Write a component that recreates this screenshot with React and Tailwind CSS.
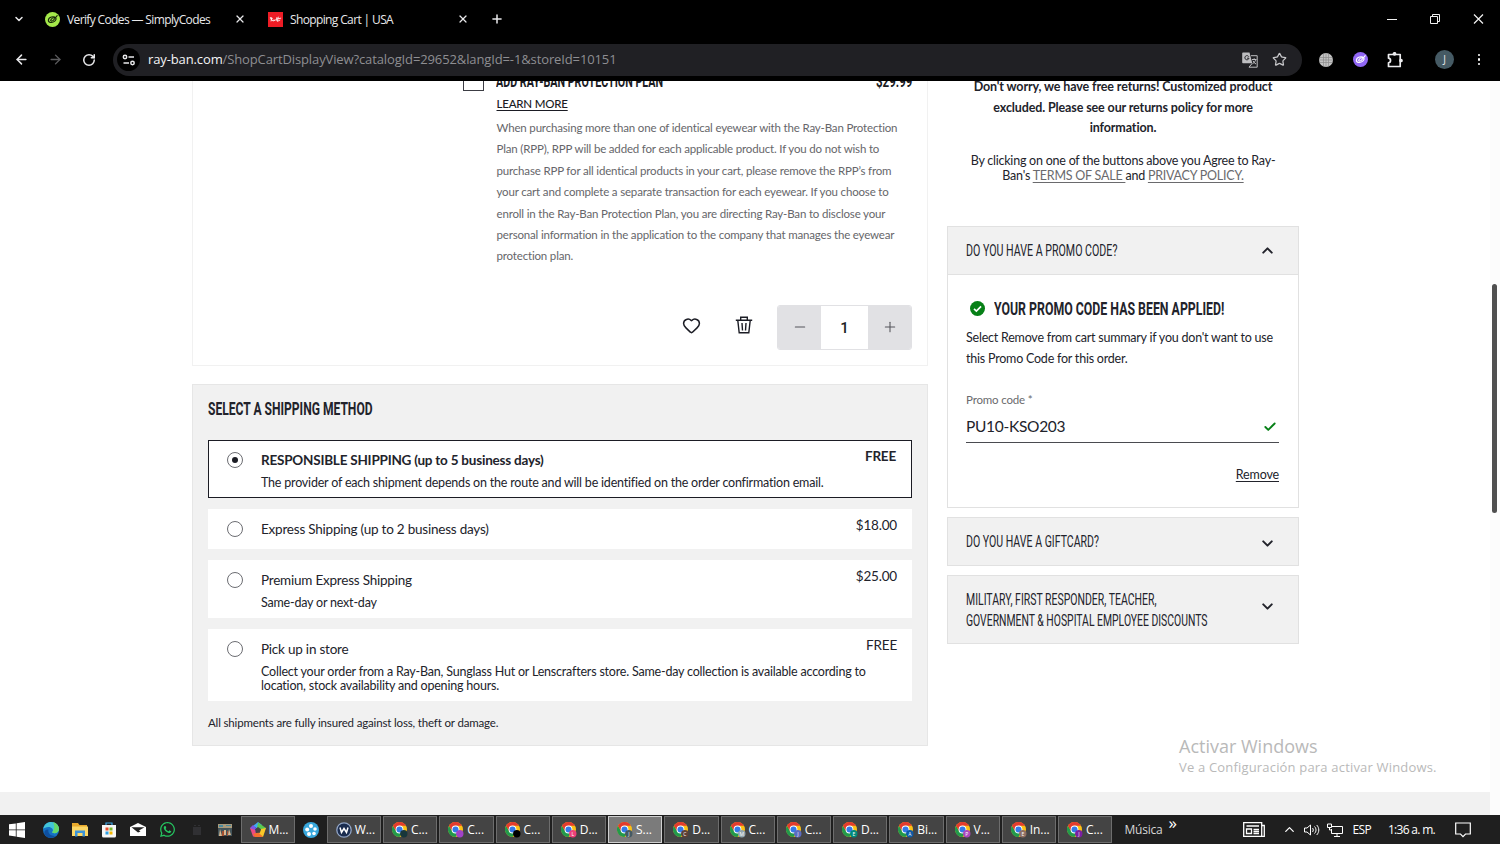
import React from 'react';
import {
  ArrowLeft, ArrowRight, Check, ChevronDown, ChevronUp, Heart, Minus, Plus, RotateCw, Star, X,
} from 'lucide-react';
import { FaWhatsapp } from 'react-icons/fa';

const shippingMethods = [
  {
    title: 'RESPONSIBLE SHIPPING (up to 5 business days)',
    note: ['The provider of each shipment depends on the route and will be identified on the order confirmation email.'],
    price: 'FREE',
    height: 'h-[58px]',
    selected: true,
  },
  { title: 'Express Shipping (up to 2 business days)', price: '$18.00', height: 'h-[40px]' },
  { title: 'Premium Express Shipping', note: ['Same-day or next-day'], price: '$25.00', height: 'h-[58px]' },
  {
    title: 'Pick up in store',
    note: [
      'Collect your order from a Ray-Ban, Sunglass Hut or Lenscrafters store. Same-day collection is available according to',
      'location, stock availability and opening hours.',
    ],
    price: 'FREE',
    height: 'h-[72px]',
  },
];

const chromeWindows = [
  { label: 'C...', badge: '#17363b' },
  { label: 'C...', badge: '#a142c8' },
  { label: 'C...', badge: '#000000' },
  { label: 'D...', badge: '#ec407a', letter: 'L' },
  { label: 'S...', badge: '#455a64', letter: 'J', active: true },
  { label: 'D...', badge: '#5d4037', letter: 'C' },
  { label: 'C...', badge: '#90a4ae', letter: 'M' },
  { label: 'C...', badge: '#5c6bc0', letter: 'J' },
  { label: 'D...', badge: '#00897b', letter: 'E' },
  { label: 'Bi...', badge: '#0d5aa7', letter: 'A' },
  { label: 'V...', badge: '#ab47bc', letter: 'P' },
  { label: 'In...', badge: '#8d6e63', letter: 'E' },
  { label: 'C...', badge: '#7b1fa2', letter: 'J' },
];

const CodeMark = ({ bg, fg }) => (
  <svg viewBox="0 0 16 16" className="h-[15px] w-[15px] shrink-0">
    <circle cx="8" cy="8" r="8" fill={bg} />
    <path d="M11.5 6.2C9.5 4.2 4 5 3.6 8.6c-.3 3 4.300 3.400 6.800 1.200.9-.9 1.300-1.700 1.500-2.500M6 8.500c0 2 2.400 1.200 3.600-.5L13 3.900M6.500 8c.8-1.400 3-2 4.500-1.700" fill="none" stroke={fg} strokeWidth="1.2" strokeLinecap="round" />
  </svg>
);

const Tab = ({ icon, title, className }) => (
  <div className={`flex items-center ${className}`}>
    {icon}
    <span className="ml-[7px] mt-[2px] flex-1 whitespace-nowrap text-[12px] tracking-[-0.63px]">{title}</span>
    <X size={12} strokeWidth={2.4} />
  </div>
);

const BrowserBar = () => (
  <header className="h-[81px] shrink-0 bg-black text-[#e8e8ea]">
    <div className="flex h-[38px] items-center pl-[13px] pr-[16px]">
      <ChevronDown size={12} strokeWidth={3} />
      <Tab
        title="Verify Codes — SimplyCodes"
        className="ml-5 w-[201px]"
        icon={<CodeMark bg="#a4e84a" fg="#16240a" />}
      />
      <Tab
        title="Shopping Cart | USA"
        className="ml-[22px] w-[201px]"
        icon={
          <svg viewBox="0 0 16 16" className="h-[15px] w-[15px] shrink-0">
            <rect width="16" height="16" fill="#ee1c25" />
            <path d="M2 6l2 .2L3.200 10M2 7.500c3-2 3.500.3 1.400.7l2.300 1.500.7-1.500.6 1.200.9-1.500M9.500 5.500L8.700 9.500M9.500 7.500l4.500-1M11 5l-1 5 3-1.500" fill="none" stroke="#fff" strokeWidth=".9" />
          </svg>
        }
      />
      <Plus size={14} strokeWidth={2.6} className="ml-[21px]" />
      <svg viewBox="0 0 98 12" className="ml-auto h-3 w-[98px]" fill="none" stroke="#f1f1f1" strokeWidth="1">
        <path d="M1 6.500h10M46.500 3.500V1.500h7v7h-2M44.500 3.500h7v7h-7z" />
        <path d="M88 1.500l9 9M97 1.500l-9 9" strokeWidth="1.200" />
      </svg>
    </div>
    <div className="flex h-[43px] items-center pl-[14px] pr-[15px]">
      <ArrowLeft size={15} strokeWidth={2.4} />
      <ArrowRight size={15} strokeWidth={2.2} className="ml-[19px] text-[#5c5c5e]" />
      <RotateCw size={14} strokeWidth={2.6} className="ml-[19px]" />
      <div className="ml-[17px] flex h-8 w-[1189px] items-center rounded-full bg-[#202024] pl-1 pr-[15px]">
        <div className="flex h-[23px] w-[23px] items-center justify-center rounded-full bg-black">
          <svg viewBox="0 0 14 12" className="h-3 w-3.5" fill="none" stroke="#e8e8ea" strokeWidth="1.500">
            <circle cx="3" cy="3" r="1.700" />
            <path d="M6.500 3H12M1.500 9H7" />
            <circle cx="10.500" cy="9" r="1.700" />
          </svg>
        </div>
        <span className="ml-[8px] flex-1 whitespace-nowrap text-[13px] tracking-[-0.12px] text-[#8e8e92]">
          <span className="text-[#f4f4f6]">ray-ban.com</span>
          /ShopCartDisplayView?catalogId=29652&amp;langId=-1&amp;storeId=10151
        </span>
        <svg viewBox="0 0 16 16" className="h-4 w-4" fill="none">
          <path d="M1 .5h6.500l2.800 10.700H1a.8.8 0 0 1-.8-.8V1.300A.8.8 0 0 1 1 .5z" fill="#bdbdc0" />
          <path d="M6.800 4.700a2.100 2.100 0 1 0 .2 1.500H5" stroke="#29292d" strokeWidth="1" />
          <path d="M9 3.700h6.200v11.500H7l3.300-4M10 7.500h4.500M12.200 6.300v1.200M13.700 7.500c-.4 2-1.500 3.200-3 4.300M11 8.800c.6 1.500 1.600 2.500 3 3.200" stroke="#bdbdc0" strokeWidth="1" />
        </svg>
        <Star size={15} strokeWidth={2} className="ml-[14px] text-[#c7c7ca]" />
      </div>
      <svg viewBox="0 0 14 14" className="ml-[17px] h-3.5 w-3.5">
        <circle cx="7" cy="7" r="7" fill="#c3c3c3" />
        <path d="M4.500 1v12M7 0v14M9.500 1v12M0 7h14M1 4.500h12M1 9.500h12" stroke="#8b8b8b" strokeWidth=".7" />
      </svg>
      <div className="ml-5"><CodeMark bg="#9167f5" fg="#fff" /></div>
      <svg viewBox="0 0 16 16" className="ml-[19px] h-4 w-4" fill="none" stroke="#ececee" strokeWidth="1.700" strokeLinejoin="round">
        <path d="M1.500 2.500H13.200V14.500H1.500V10.800c2.700-.2 2.700-4.400 0-4.600z" />
        <circle cx="7.500" cy="1.800" r="1" fill="#ececee" />
        <circle cx="14" cy="8.500" r="1" fill="#ececee" />
      </svg>
      <span className="ml-8 flex h-[19px] w-[19px] items-center justify-center rounded-full bg-[#455a64] text-[10px]">J</span>
      <span className="ml-auto mr-[5px] flex flex-col gap-[2px]">
        <i className="h-[2.500px] w-[2.500px] rounded-full bg-white" />
        <i className="h-[2.500px] w-[2.500px] rounded-full bg-white" />
        <i className="h-[2.500px] w-[2.500px] rounded-full bg-white" />
      </span>
    </div>
  </header>
);

// Tall condensed display type used for headings
const Display = ({ children, className }) => (
  <span className={`block w-max origin-left whitespace-nowrap font-['Roboto','Liberation_Sans',sans-serif] ${className}`}>
    {children}
  </span>
);

const TrashIcon = () => (
  <svg viewBox="0 0 18 18" className="h-[18px] w-[18px]" fill="none" stroke="#1b1c24" strokeWidth="1.400">
    <path d="M.8 4.200h16.400M5.700 4V1.200h6.600V4M2.800 4.500l1.400 12.300h9.600l1.400-12.300M7 7l.5 7.500M11 7l-.5 7.500" />
  </svg>
);

const ProductCard = () => (
  <section className="h-[285px] overflow-hidden border border-t-0 border-[#f1f1f1] pl-[270px] pr-[15px]">
    <div className="-mt-[11px] flex h-[22px]">
      <span className="h-[21px] w-[21px] border border-[#3c3d44]" />
      <div className="ml-[12px] w-[300px] pt-px">
        <Display className="scale-x-[0.67] text-[16px] font-bold leading-[22px] text-[#1b1c24]">ADD RAY-BAN PROTECTION PLAN</Display>
      </div>
      <div className="ml-auto w-9 pt-px">
        <Display className="scale-x-[0.72] text-[16px] font-bold leading-[22px] text-[#1b1c24]">$29.99</Display>
      </div>
    </div>
    <div className="ml-[33.500px]">
      <a className="block pt-1 text-[11.500px] font-medium leading-4 tracking-[-0.2px] text-[#1b1c24] underline underline-offset-2">LEARN MORE</a>
      <p className="mt-[5px] whitespace-nowrap text-[11.500px] leading-[21.4px] tracking-[-0.17px] text-[#66666a]">
        When purchasing more than one of identical eyewear with the Ray-Ban Protection<br />
        Plan (RPP), RPP will be added for each applicable product. If you do not wish to<br />
        purchase RPP for all identical products in your cart, please remove the RPP’s from<br />
        your cart and complete a separate transaction for each eyewear. If you choose to<br />
        enroll in the Ray-Ban Protection Plan, you are directing Ray-Ban to disclose your<br />
        personal information in the application to the company that manages the eyewear<br />
        protection plan.
      </p>
    </div>
    <div className="mt-[38px] flex justify-end">
      <Heart size={19} strokeWidth={1.900} className="mr-[34px] mt-[11px] text-[#1b1c24]" />
      <div className="mr-[24.500px] mt-[11px]"><TrashIcon /></div>
      <div className="flex h-[45px] w-[135px] overflow-hidden rounded-[3px] border border-[#e1e1e4] bg-white">
        <span className="flex w-[43px] items-center justify-center bg-[#e1e1e4]"><Minus size={16} strokeWidth={1.600} className="text-[#55555b]" /></span>
        <span className="flex flex-1 items-center justify-center pt-px font-['Roboto'] text-[15px] font-medium text-[#1b1c24]">1</span>
        <span className="flex w-[43px] items-center justify-center bg-[#e1e1e4]"><Plus size={16} strokeWidth={1.600} className="text-[#55555b]" /></span>
      </div>
    </div>
  </section>
);

const ShippingOption = ({ title, note, price, height, selected }) => (
  <div className={`flex bg-white pr-[15px] ${height} ${selected ? 'border border-[#1b1c24] pl-[18px]' : 'pl-[19px]'}`}>
    <span className={`flex h-4 w-4 shrink-0 items-center justify-center rounded-full border border-[#6c6d72] ${selected ? 'mt-[10.500px]' : 'mt-[11.500px]'}`}>
      {selected && <i className="h-[6px] w-[6px] rounded-full bg-[#1b1c24]" />}
    </span>
    <div className={`ml-[18px] w-[590px] shrink-0 whitespace-nowrap ${selected ? 'pt-[9.500px]' : 'pt-[10.500px]'}`}>
      <h3 className={`text-[13.500px] leading-[18px] tracking-[-0.22px] ${selected ? 'font-bold' : ''}`}>{title}</h3>
      {note && (
        <div className="mt-[7.500px] text-[12.500px] leading-[14px] tracking-[-0.2px]">
          {note.map((line) => <p key={line}>{line}</p>)}
        </div>
      )}
    </div>
    <span className={`ml-auto text-[13.500px] leading-[18px] tracking-[-0.2px] ${selected ? 'pt-[6px] font-bold' : 'pt-[7px]'}`}>{price}</span>
  </div>
);

const Shipping = () => (
  <section className="mt-[18px] h-[362px] border border-[#e6e6e6] bg-[#f1f1f1] px-[15px] text-[#22232b]">
    <Display className="mb-[19px] mt-[12px] scale-x-[0.69] text-[17.500px] font-bold leading-6">SELECT A SHIPPING METHOD</Display>
    <div className="flex flex-col gap-[11px]">
      {shippingMethods.map((m) => <ShippingOption key={m.title} {...m} />)}
    </div>
    <p className="mt-[13px] text-[11.500px] leading-[18px] tracking-[-0.16px]">All shipments are fully insured against loss, theft or damage.</p>
  </section>
);

const Sidebar = () => (
  <aside className="ml-[19px] w-[352px] text-[#22232b]">
    <p className="-mt-[4px] whitespace-nowrap text-center text-[12.500px] font-bold leading-[20.500px] tracking-[-0.12px]">
      Don't worry, we have free returns! Customized product<br />
      excluded. Please see our returns policy for more<br />
      information.
    </p>
    <p className="mt-[14px] whitespace-nowrap text-center text-[12.500px] leading-[15px] tracking-[-0.23px]">
      By clicking on one of the buttons above you Agree to Ray-<br />
      Ban's <a className="text-[#6a6a6d] underline underline-offset-2">TERMS OF SALE </a>and <a className="text-[#6a6a6d] underline underline-offset-2">PRIVACY POLICY.</a>
    </p>

    <section className="mt-[43.500px] h-[282px] border border-[#e1e1e1]">
      <div className="flex h-12 items-center border-b border-[#e1e1e1] bg-[#f1f1f1] pl-[18px] pr-[22px]">
        <div className="w-[280px] pt-[2px]">
          <Display className="scale-x-[0.645] text-[16.500px]">DO YOU HAVE A PROMO CODE?</Display>
        </div>
        <ChevronUp size={17} strokeWidth={2.800} className="ml-auto" />
      </div>
      <div className="px-[18px] pt-[21px]">
        <div className="flex h-6 items-center">
          <svg viewBox="0 0 16 16" className="ml-1 h-[15px] w-[15px] shrink-0">
            <circle cx="8" cy="8" r="8" fill="#078017" />
            <path d="M4.300 8.300l2.500 2.400 5-5" fill="none" stroke="#fff" strokeWidth="1.800" />
          </svg>
          <Display className="ml-[9px] scale-x-[0.685] text-[18px] font-bold">YOUR PROMO CODE HAS BEEN APPLIED!</Display>
        </div>
        <p className="mt-[8px] whitespace-nowrap text-[12.500px] leading-[20.500px] tracking-[-0.22px]">
          Select Remove from cart summary if you don't want to use<br />
          this Promo Code for this order.
        </p>
        <label className="mt-[23px] block text-[11.500px] leading-4 tracking-[-0.16px] text-[#6a6a6d]">Promo code *</label>
        <div className="mt-[3px] flex h-[32px] w-[313px] items-center border-b border-[#4a4b50] text-[15.500px] tracking-[-0.3px]">
          <span>PU10-KSO203</span>
          <Check size={14} strokeWidth={3.200} className="ml-auto mr-[2px] text-[#078017]" />
        </div>
        <a className="mt-[23px] block w-[313px] text-right text-[12.500px] leading-[18px] tracking-[-0.15px] underline underline-offset-2">Remove</a>
      </div>
    </section>

    <section className="mt-[9px] flex h-[49px] items-center border border-[#e1e1e1] bg-[#f1f1f1] pl-[18px] pr-[22px]">
      <div className="w-[280px] pt-[2px]">
        <Display className="scale-x-[0.64] text-[16.500px]">DO YOU HAVE A GIFTCARD?</Display>
      </div>
      <ChevronDown size={17} strokeWidth={2.800} className="ml-auto mt-[3px]" />
    </section>
    <section className="mt-[9px] flex h-[69px] items-center border border-[#e1e1e1] bg-[#f1f1f1] pl-[18px] pr-[22px]">
      <div className="w-[280px] pt-[2px]">
        <Display className="scale-x-[0.635] text-[16.500px] leading-[20.500px]">MILITARY, FIRST RESPONDER, TEACHER,</Display>
        <Display className="scale-x-[0.63] text-[16.500px] leading-[20.500px]">GOVERNMENT &amp; HOSPITAL EMPLOYEE DISCOUNTS</Display>
      </div>
      <ChevronDown size={17} strokeWidth={2.800} className="-mt-[6px] ml-auto shrink-0" />
    </section>
  </aside>
);

const ChromeIcon = ({ badge, letter }) => (
  <svg viewBox="0 0 16 16" className="h-4 w-4 shrink-0">
    <circle cx="7.500" cy="7.500" r="7.500" fill="#fbc116" />
    <path d="M1 3.750A7.500 7.500 0 0 0 7.500 15L10.700 9.400 4.200 9.300z" fill="#229a4b" />
    <path d="M1 3.750A7.500 7.500 0 0 1 14 3.750H7.500L4.200 9.300z" fill="#e33b2e" />
    <circle cx="7.500" cy="7.500" r="3.900" fill="#fff" />
    <circle cx="7.500" cy="7.500" r="3" fill="#3579e8" />
    <circle cx="11.800" cy="11.800" r="3.700" fill={badge} />
    {letter && <text x="11.800" y="13.600" textAnchor="middle" fontSize="5" fill="#fff">{letter}</text>}
  </svg>
);

const TaskButton = ({ icon, label, active, className = '' }) => (
  <div
    className={`flex h-[27px] w-[54.300px] shrink-0 items-center gap-[3px] border pl-[8px] text-[12px] text-white ${
      active ? 'border-[#d0d0d0] bg-[#7b7b7b]' : 'border-[#6d6d6d] bg-[#444444]'
    } ${className}`}
  >
    {icon}
    <span className="tracking-[-0.1px]">{label}</span>
  </div>
);

const Taskbar = () => (
  <footer className="flex h-[29px] shrink-0 items-center bg-[#1f1f1f] text-white">
    <svg viewBox="0 0 16 16" className="ml-[9px] h-4 w-4" fill="#fff">
      <path d="M0 2.300L6.800 1.400V7.500H0zM7.600 1.300L16 0v7.500H7.600zM0 8.300h6.800v6.200L0 13.600zM7.600 8.300H16V16l-8.400-1.200z" />
    </svg>
    <svg viewBox="0 0 16 16" className="ml-[18px] h-4 w-4">
      <circle cx="8" cy="8" r="8" fill="#1672c4" />
      <path d="M.2 7C1 2.500 4.500 0 8 0c5 0 8 3.500 8 7 0 2.700-2 4.200-4.500 4.200-2 0-2.600-.8-2-1.500C11 7.500 8.500 5 5.500 5 3 5 1 6 .2 7z" fill="#43c5d8" />
      <path d="M10 .3c4 .9 6 4 6 6.700 0 2.700-2 4.200-4.500 4.200-2 0-2.600-.8-2-1.500C12 7 11.500 3 10 .3z" fill="#65d96b" />
      <path d="M5.500 7.500C4.500 11 7.500 14.500 12.500 14c-4 3-9.500 2-11-2C.8 9 2.500 7 5.500 7.500z" fill="#0e4f9e" />
    </svg>
    <svg viewBox="0 0 16 16" className="ml-[12.500px] h-4 w-4">
      <path d="M0 1h6l1.500 2H15v11H0z" fill="#e9aa2c" />
      <path d="M0 4.500h16V14H0z" fill="#fcd766" />
      <path d="M3 14.500V8.500h10v6h-2.500V11h-5v3.500z" fill="#3b93d8" />
    </svg>
    <svg viewBox="0 0 16 16" className="ml-[13px] h-4 w-4">
      <path d="M5 3V1h6v2" fill="none" stroke="#3ba5e6" strokeWidth="1.200" />
      <path d="M1 3h14v11a1.500 1.500 0 0 1-1.500 1.500h-11A1.500 1.500 0 0 1 1 14z" fill="#f6f6f6" />
      <path d="M4.500 5.500h3v3h-3z" fill="#e94f2e" /><path d="M8.500 5.500h3v3h-3z" fill="#77b82a" />
      <path d="M4.500 9.500h3v3h-3z" fill="#2d9fe3" /><path d="M8.500 9.500h3v3h-3z" fill="#f5b800" />
    </svg>
    <svg viewBox="0 0 16 16" className="ml-[13px] h-4 w-4">
      <path d="M0 5l8-4 8 4v9H0z" fill="#fff" />
      <path d="M1.500 5.200h13L9 8.500l1.500 1L8 10.500z" fill="#222" />
    </svg>
    <FaWhatsapp size={17} className="ml-[13px] text-[#25c560]" />
    <svg viewBox="0 0 10 12" className="ml-[16px] h-3 w-2.5">
      <path d="M1 3h8v8H1zM2 1h2v1H2zM6 1h2v1H6z" fill="#303033" />
    </svg>
    <svg viewBox="0 0 16 16" className="ml-[15px] h-4 w-4">
      <path d="M1 2h14v4H1z" fill="#a89a7c" /><path d="M1 6h14v8H1z" fill="#43545a" />
      <path d="M2 3h4v2H2zM9 3h5v1H9z" fill="#4a8ba0" /><path d="M3 7l2 7H2zM7 8h2v5H7zM12 7l2 6h-3z" fill="#d9b78f" />
      <path d="M5 9h2v5H5zM10 9h1v5h-1z" fill="#a34e2e" />
    </svg>
    <TaskButton
      className="ml-[8px]"
      label="M..."
      icon={
        <svg viewBox="0 0 16 16" className="h-4 w-4 shrink-0">
          <path d="M8 0l4 3-4 4-5-3z" fill="#3fa9f5" /><path d="M3 3l4 4-3 5-4-6z" fill="#7e57e8" />
          <path d="M8 .5l8 5.500-3 4-6-4z" fill="#5bc94e" /><path d="M0 6l5 2 2 7-4-.5z" fill="#ec4a82" />
          <path d="M3 12l6-2 4 5H5z" fill="#f3702e" /><path d="M16 6l-3 9-4-4 2-4z" fill="#f9c728" />
          <path d="M8 5l3 2.200-1.100 3.600H6.100L5 7.200z" fill="#444444" />
        </svg>
      }
    />
    <svg viewBox="0 0 16 16" className="ml-[8px] h-4 w-4 shrink-0">
      <circle cx="8" cy="8" r="8" fill="#38a7dc" />
      <g fill="#fff"><circle cx="8" cy="4" r="2" /><circle cx="4.200" cy="7.500" r="2" /><circle cx="12" cy="7" r="1.800" /><circle cx="6" cy="12" r="2" /><circle cx="11" cy="11.500" r="1.800" /></g>
    </svg>
    <TaskButton
      className="ml-[8px]"
      label="W..."
      icon={
        <svg viewBox="0 0 16 16" className="h-4 w-4 shrink-0">
          <circle cx="8" cy="8" r="7.200" fill="#1b2d4f" stroke="#91a4c4" strokeWidth="1.300" />
          <path d="M4 5.500l1.500 5L8 6.500l2.500 4 1.500-5" fill="none" stroke="#fff" strokeWidth="1.500" />
        </svg>
      }
    />
    <div className="ml-[2px] flex gap-[1.960px]">
      {chromeWindows.map((w, i) => (
        <TaskButton key={i} label={w.label} active={w.active} icon={<ChromeIcon badge={w.badge} letter={w.letter} />} />
      ))}
    </div>
    <span className="ml-[12px] text-[12px] tracking-[-0.2px] text-[#d6d6d6]">Música</span>
    <span className="-mt-[14px] ml-[6px] text-[17px] leading-4">»</span>
    <svg viewBox="0 0 22 15" className="ml-auto h-[15px] w-[22px]" fill="none" stroke="#fff" strokeWidth="1.300">
      <path d="M.7.700h18v13.600h-18zM18.700 3.500h2.600v10.800h-3M3.500 4h12.500M3.500 7h5v4.500h-5zM10.500 7.500H16M10.500 9.500H16M10.500 11.500H16" />
    </svg>
    <ChevronUp size={15} strokeWidth={2} className="ml-[17px]" />
    <svg viewBox="0 0 16 14" className="ml-[7px] h-3.5 w-4" fill="none" stroke="#fff">
      <path d="M.5 5v4H3l3.500 3V2L3 5zM8.500 5c1 1.200 1 2.800 0 4M10.500 3.500c2 2 2 5 0 7M12.700 2c2.800 3 2.800 7 0 10" />
    </svg>
    <svg viewBox="0 0 16 14" className="ml-[7px] h-3.5 w-4" fill="none" stroke="#fff">
      <path d="M5 3.500h10.500v7H4.500V6M10 10.500v3M7 13.500h6M.5 1h4v3.500h-4zM2.500 4.500V7H5" />
    </svg>
    <span className="ml-[10px] text-[12px] tracking-[-0.7px]">ESP</span>
    <span className="ml-[17px] text-[12px] tracking-[-0.700px]">1:36 a. m.</span>
    <svg viewBox="0 0 16 16" className="ml-[20px] mr-[29px] h-4 w-4" fill="none" stroke="#fff" strokeWidth="1.200">
      <path d="M.7 1h14.600v11H10.500L8 14.700 5.500 12H.7z" />
    </svg>
  </footer>
);

const App = () => (
  <div className="flex h-[844px] w-[1500px] flex-col overflow-hidden bg-white font-['Open_Sans','Noto_Sans',sans-serif]">
    <BrowserBar />
    <main className="relative flex h-[734px] overflow-hidden font-['Lato',sans-serif]">
      <div className="flex flex-1 flex-col">
        <div className="flex h-[711px] pl-[192px]">
          <div className="w-[736px]">
            <ProductCard />
            <Shipping />
          </div>
          <Sidebar />
        </div>
        <div className="flex-1 bg-[#f1f1f1]" />
      </div>
      <div className="w-[10px] bg-[#fcfcfc] pl-[2px] pt-[203px]">
        <div className="h-[229px] w-[5px] rounded-full bg-[#4f4f4f]" />
      </div>
      <div className="absolute left-[1179px] top-[654px] whitespace-nowrap font-['Open_Sans',sans-serif] text-[#b9b9b9]">
        <div className="text-[18px] leading-[22px]">Activar Windows</div>
        <div className="text-[13px] leading-[20px] tracking-[0.18px]">Ve a Configuración para activar Windows.</div>
      </div>
    </main>
    <Taskbar />
  </div>
);

export default App;
